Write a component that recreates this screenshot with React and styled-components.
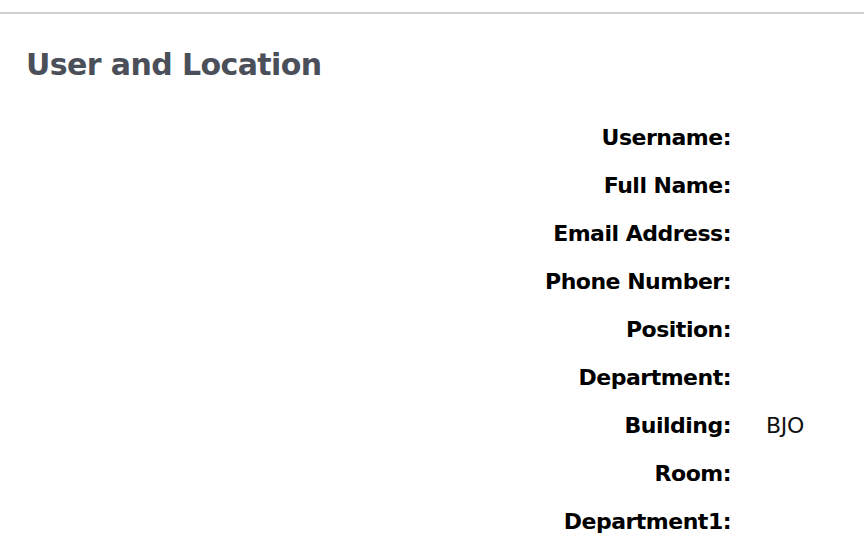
import React from "react";
import styled, { createGlobalStyle } from "styled-components";

const Global = createGlobalStyle`
  html, body { margin: 0; padding: 0; background: #fff; }
  body { font-family: "DejaVu Sans", "Liberation Sans", sans-serif; }
`;

const Page = styled.div`
  width: 864px;
  height: 556px;
  overflow: hidden;
  padding-top: 12px;
  box-sizing: border-box;
`;

const Divider = styled.hr`
  margin: 0;
  border: 0;
  border-top: 2px solid #cfcfcf;
`;

const Title = styled.h2`
  margin: 0;
  padding: 33px 0 0 26px;
  font-size: 30px;
  line-height: 36px;
  font-weight: bold;
  color: #4b4f59;
  letter-spacing: -0.6px;
`;

const Grid = styled.dl`
  margin: 0;
  padding-top: 43px;
  display: grid;
  grid-template-columns: 731px 1fr;
  column-gap: 35px;
  grid-auto-rows: 48px;
  font-size: 22px;
`;

const Label = styled.dt`
  margin: 0;
  text-align: right;
  font-weight: bold;
  color: #000;
  line-height: 24px;
  letter-spacing: -0.5px;
`;

const Value = styled.dd`
  margin: 0;
  color: #111;
  line-height: 24px;
  letter-spacing: -0.3px;
`;

const rows = [
  ["Username:", ""],
  ["Full Name:", ""],
  ["Email Address:", ""],
  ["Phone Number:", ""],
  ["Position:", ""],
  ["Department:", ""],
  ["Building:", "BJO"],
  ["Room:", ""],
  ["Department1:", ""],
];

export default function App() {
  return (
    <Page>
      <Global />
      <Divider />
      <Title>User and Location</Title>
      <Grid>
        {rows.map(([l, v]) => (
          <React.Fragment key={l}>
            <Label>{l}</Label>
            <Value>{v}</Value>
          </React.Fragment>
        ))}
      </Grid>
    </Page>
  );
}
